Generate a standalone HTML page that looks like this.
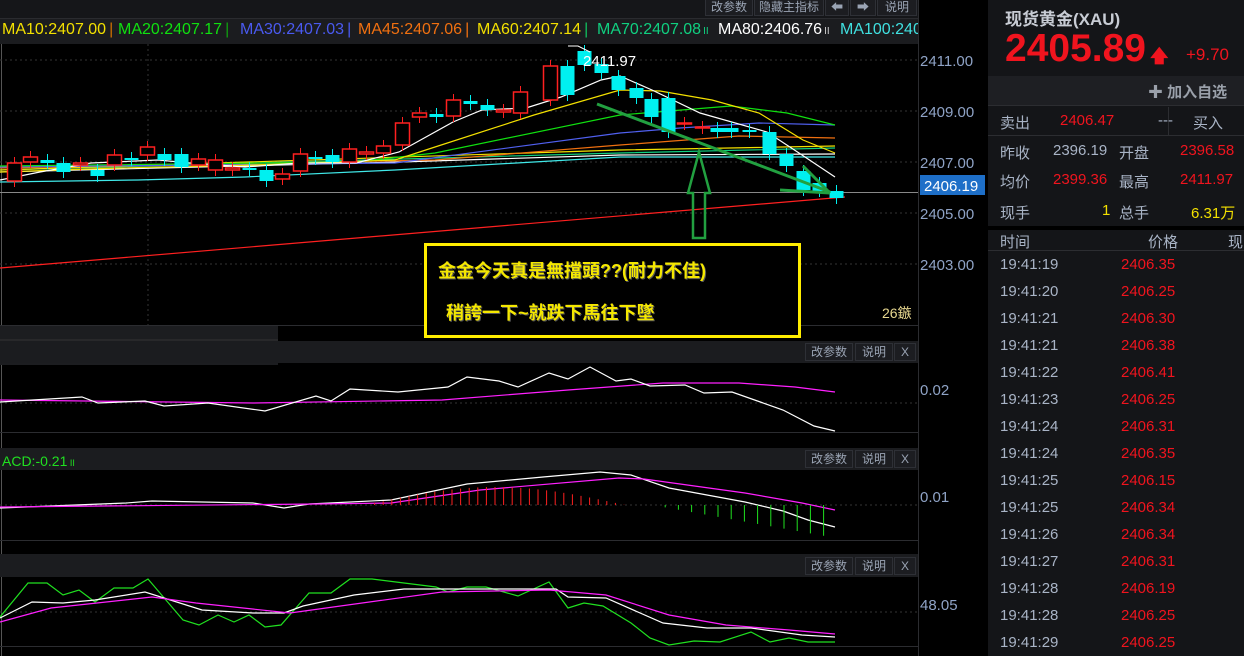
<!DOCTYPE html>
<html><head><meta charset="utf-8">
<style>
*{margin:0;padding:0;box-sizing:border-box}
body{width:1244px;height:656px;background:#000;overflow:hidden;font-family:"Liberation Sans","Noto Sans CJK SC",sans-serif;position:relative}
.abs{position:absolute}
.btn{position:absolute;height:18px;background:#1c1d21;border:1px solid #2e3036;color:#9aa4b4;font-size:12px;line-height:16px;text-align:center}
.rp{position:absolute;left:988px;top:0;width:256px;height:656px;background:#141518}
.t{position:absolute;font-size:15px;white-space:nowrap}
.g{color:#a9b4c6}.r{color:#f0141e}.y{color:#f3e000}
.lg{position:absolute;top:1px;font-size:16px;white-space:nowrap}
</style></head><body>
<div class="abs" style="left:0;top:0;width:918px;height:18px;background:#151619"></div>
<div class="abs" style="left:0;top:18px;width:918px;height:26px;background:#1b1c1f;border-top:1px solid #2a2b2f"></div>
<div class="btn" style="left:705px;top:-2px;width:48px">改参数</div>
<div class="btn" style="left:754px;top:-2px;width:70px">隐藏主指标</div>
<div class="btn" style="left:825px;top:-2px;width:24px">⬅</div>
<div class="btn" style="left:850px;top:-2px;width:26px">➡</div>
<div class="btn" style="left:877px;top:-2px;width:40px">说明</div>
<div class="abs" style="left:0;top:20px;width:918px;height:24px;overflow:hidden">
<div class="lg" style="left:2px;color:#f3e000">MA10:2407.00<span style="color:#d07000;margin-left:3px">|</span></div>
<div class="lg" style="left:118px;color:#10e010">MA20:2407.17<span style="color:#10a010;margin-left:3px">|</span></div>
<div class="lg" style="left:240px;color:#4a5af0">MA30:2407.03<span style="margin-left:3px">|</span></div>
<div class="lg" style="left:358px;color:#f07010">MA45:2407.06<span style="margin-left:3px">|</span></div>
<div class="lg" style="left:477px;color:#f3e000">MA60:2407.14<span style="color:#10c060;margin-left:3px">|</span></div>
<div class="lg" style="left:597px;color:#10d080">MA70:2407.08<span style="font-size:10px;margin-left:2px">II</span></div>
<div class="lg" style="left:718px;color:#fff">MA80:2406.76<span style="font-size:10px;color:#ccc;margin-left:2px">II</span></div>
<div class="lg" style="left:840px;color:#40e0e0">MA100:2406.50</div>
</div>

<svg class="abs" style="left:0;top:0" width="988" height="656">
<line x1="1.5" y1="44" x2="1.5" y2="656" stroke="#555"/>
<line x1="918.5" y1="0" x2="918.5" y2="656" stroke="#2b2c30"/>
<g stroke="#333" stroke-dasharray="2,3">
<line x1="0" y1="60" x2="918" y2="60"/><line x1="0" y1="111" x2="918" y2="111"/><line x1="0" y1="162" x2="918" y2="162"/><line x1="0" y1="213" x2="918" y2="213"/><line x1="0" y1="264" x2="918" y2="264"/>
<line x1="148" y1="44" x2="148" y2="325"/><line x1="0" y1="403" x2="918" y2="403"/><line x1="0" y1="505" x2="918" y2="505"/><line x1="0" y1="612" x2="918" y2="612"/>
</g>
<line x1="0" y1="192.5" x2="918" y2="192.5" stroke="#888"/>
<g fill="none" stroke-width="1.2">
<polyline stroke="#ff2020" points="0,268 845,197"/>
<polyline stroke="#40e8e8" points="0,182 138,180 245,177 395,170 620,157 835,157"/>
<polyline stroke="#ffffff" points="0,172 400,162 620,155 835,154"/>
<polyline stroke="#10d080" points="0,170 620,153 835,148"/>
<polyline stroke="#f3e000" points="0,170 620,150 835,146"/>
<polyline stroke="#f07010" points="0,168 435,160 620,145 739,136 835,138"/>
<polyline stroke="#5060f0" points="0,167 395,163 620,133 680,128 759,123 835,125"/>
<polyline stroke="#10e010" points="0,166 356,162 435,153 620,115 731,106 787,113 835,125"/>
<polyline stroke="#f3e000" points="0,172 119,168 253,165 395,160 435,147 534,115 620,90 660,91 712,100 759,113 803,140 835,153"/>
<polyline stroke="#ffffff" points="0,180 40,172 91,163 158,160 190,163 245,167 300,163 356,163 399,152 453,122 482,110 526,108 561,97 601,80 620,76 652,90 700,113 767,132 799,153 835,177"/>
</g>
<g id="c"></g>
<text x="583" y="66" fill="#fff" font-size="15" font-family="Liberation Sans">2411.97</text>
<polyline points="568,46 578,46 590,52" fill="none" stroke="#fff"/>
<line x1="597" y1="104" x2="830" y2="192" stroke="#22a040" stroke-width="3"/>
<line x1="803" y1="166" x2="830" y2="193" stroke="#22a040" stroke-width="3"/>
<line x1="780" y1="190" x2="830" y2="193" stroke="#22a040" stroke-width="3"/>
<polygon points="699,152 710,193 705,193 705,238 693,238 693,193 688,193" fill="none" stroke="#22a040" stroke-width="2.5"/>
<rect x="0" y="325" width="278" height="40" fill="#1c1d20"/><line x1="0" y1="340" x2="278" y2="340" stroke="#333"/>
<line x1="0" y1="325.5" x2="918" y2="325.5" stroke="#2b2c30"/>
<rect x="0" y="341" width="918" height="22" fill="#1b1c1f"/>
<line x1="0" y1="432.5" x2="918" y2="432.5" stroke="#2b2c30"/>
<rect x="0" y="448" width="918" height="22" fill="#1b1c1f"/>
<line x1="0" y1="540.5" x2="918" y2="540.5" stroke="#2b2c30"/>
<rect x="0" y="554" width="918" height="23" fill="#1b1c1f"/>
<line x1="0" y1="646.5" x2="918" y2="646.5" stroke="#2b2c30"/>
<g fill="none" stroke-width="1.2">
<polyline stroke="#ff20ff" points="0,400 253,403 442,400 568,390 663,383 739,383 795,387 835,392"/>
<polyline stroke="#fff" points="0,402 82,397 98,403 145,401 164,406 208,403 265,411 316,396 331,401 350,389 398,392 448,387 467,377 499,381 518,387 549,373 568,379 590,367 616,381 631,379 650,386 685,385 704,393 732,392 783,410 814,426 835,431"/>
<polyline stroke="#fff" points="0,508 126,503 152,501 253,503 284,508 309,504 391,500 467,484 543,477 600,472 631,475 669,488 745,502 783,511 808,520 835,527"/>
<polyline stroke="#ff20ff" points="0,507 316,504 391,503 480,490 619,478 644,479 745,493 802,503 835,510"/>
<polyline stroke="#20e020" points="0,617 28,583 47,583 63,595 79,590 95,602 114,588 133,588 148,579 183,620 199,625 218,615 234,622 249,615 265,627 281,625 309,593 331,593 350,579 372,579 436,587 448,592 467,587 486,587 518,596 549,582 568,608 584,603 603,606 631,623 650,638 669,645 694,641 720,642 751,632 770,642 789,638 808,642 835,642"/>
<polyline stroke="#fff" points="0,618 32,602 63,603 95,600 145,592 202,610 253,613 284,613 303,606 354,595 404,589 556,589 568,597 606,598 663,623 707,628 751,628 802,635 835,637"/>
<polyline stroke="#ff20ff" points="0,622 51,608 152,597 196,603 290,613 442,592 549,590 606,595 669,615 726,625 789,630 835,634"/>
</g>
<g id="h"></g>
<g fill="#8fa3c6" font-size="15" font-family="Liberation Sans">
<text x="920" y="66">2411.00</text><text x="920" y="117">2409.00</text><text x="920" y="168">2407.00</text><text x="920" y="219">2405.00</text><text x="920" y="270">2403.00</text>
<text x="920" y="395">0.02</text><text x="920" y="502">0.01</text><text x="920" y="610">48.05</text>
</g>
<rect x="920" y="175" width="65" height="20" fill="#1e6fc8"/>
<text x="924" y="191" fill="#fff" font-size="15" font-family="Liberation Sans">2406.19</text>
<text x="882" y="318" fill="#e8d890" font-size="14" font-family="Liberation Sans,Noto Sans CJK SC">26鏃</text>
<text x="2" y="466" fill="#20e020" font-size="14" font-family="Liberation Sans">ACD:-0.21<tspan font-size="9"> II</tspan></text>
</svg>
<div class="btn" style="left:805px;top:343px;width:48px">改参数</div><div class="btn" style="left:855px;top:343px;width:38px">说明</div><div class="btn" style="left:894px;top:343px;width:22px">X</div>
<div class="btn" style="left:805px;top:450px;width:48px">改参数</div><div class="btn" style="left:855px;top:450px;width:38px">说明</div><div class="btn" style="left:894px;top:450px;width:22px">X</div>
<div class="btn" style="left:805px;top:557px;width:48px">改参数</div><div class="btn" style="left:855px;top:557px;width:38px">说明</div><div class="btn" style="left:894px;top:557px;width:22px">X</div>

<div class="abs" style="left:424px;top:243px;width:377px;height:95px;border:3px solid #ffee00;background:#000"></div>
<div class="t" style="left:438px;top:257px;font-size:18px;font-weight:bold;color:#f5e800;text-shadow:1px 1px 0 #555">金金今天真是無擋頭??(耐力不佳)</div>
<div class="t" style="left:446px;top:299px;font-size:18px;font-weight:bold;color:#f5e800;text-shadow:1px 1px 0 #555">稍誇一下~就跌下馬往下墜</div>

<div class="rp">
 <div class="t" style="left:17px;top:5px;font-size:17px;font-weight:bold;color:#c8ccd4">现货黄金(XAU)</div>
 <div class="t r" style="left:17px;top:27px;font-size:39px;font-weight:bold">2405.89</div>
 <div class="t r" style="left:162px;top:44px;font-size:18px;font-weight:bold">🡅</div>
 <div class="t r" style="left:198px;top:45px;font-size:17px">+9.70</div>
 <div class="abs" style="left:0;top:76px;width:256px;height:30px;background:#1e1f23;border-bottom:1px solid #2c2d31"></div>
 <div class="t" style="left:160px;top:81px;font-size:15px;font-weight:bold;color:#9aa0aa">✚ 加入自选</div>
 <div class="abs" style="left:0;top:135px;width:256px;height:1px;background:#2c2d31"></div>
 <div class="abs" style="left:180px;top:107px;width:1px;height:28px;background:#2c2d31"></div>
 <div class="t g" style="left:12px;top:112px">卖出</div><div class="t r" style="left:72px;top:112px">2406.47</div><div class="t g" style="left:170px;top:112px">---</div><div class="t g" style="left:205px;top:112px">买入</div>
 <div class="t g" style="left:12px;top:142px">昨收</div><div class="t g" style="left:65px;top:142px">2396.19</div><div class="t g" style="left:131px;top:142px">开盘</div><div class="t r" style="left:192px;top:142px">2396.58</div>
 <div class="t g" style="left:12px;top:171px">均价</div><div class="t r" style="left:65px;top:171px">2399.36</div><div class="t g" style="left:131px;top:171px">最高</div><div class="t r" style="left:192px;top:171px">2411.97</div>
 <div class="t g" style="left:12px;top:202px">现手</div><div class="t y" style="left:114px;top:202px">1</div><div class="t g" style="left:131px;top:202px">总手</div><div class="t y" style="left:203px;top:202px">6.31万</div>
 <div class="abs" style="left:0;top:226px;width:256px;height:4px;background:#000"></div>
 <div class="abs" style="left:0;top:250px;width:256px;height:1px;background:#2c2d31"></div>
 <div class="t g" style="left:12px;top:231px">时间</div><div class="t g" style="left:160px;top:231px">价格</div><div class="t g" style="left:240px;top:231px">现</div>
 <div id="rows"></div>
</div>
<script>
var c=[[14,163,181,'r'],[30,157,162,'r'],[47,160,163,'c'],[63,163,172,'c'],[80,163,165,'r'],[97,170,176,'c'],[114,155,165,'r'],[131,158,160,'c'],[147,147,155,'r'],[164,154,160,'c'],[181,154,167,'c'],[198,159,165,'r'],[215,160,170,'r'],[232,168,170,'r'],[249,168,170,'c'],[266,170,181,'c'],[282,174,179,'r'],[300,154,171,'r'],[315,157,159,'c'],[332,155,162,'c'],[349,149,162,'r'],[366,152,154,'r'],[383,146,153,'r'],[402,123,145,'r'],[419,113,117,'r'],[436,114,117,'c'],[453,100,116,'r'],[470,101,104,'c'],[487,105,110,'c'],[503,110,112,'r'],[520,92,113,'r'],[550,66,100,'r'],[567,66,95,'c'],[584,51,65,'c'],[601,64,73,'c'],[618,76,90,'c'],[636,88,98,'c'],[651,99,117,'c'],[668,98,132,'c'],[684,123,124,'r'],[702,127,128,'r'],[717,128,132,'c'],[731,128,132,'c'],[749,130,132,'c'],[769,132,154,'c'],[786,154,166,'c'],[803,171,190,'c'],[819,183,191,'c'],[836,191,198,'c']];
var s='';c.forEach(function(k){var col=k[3]=='r'?'#ff2020':'#00f0f0';s+='<line x1="'+(k[0]+.5)+'" y1="'+(k[1]-6)+'" x2="'+(k[0]+.5)+'" y2="'+(k[2]+6)+'" stroke="'+col+'"/>';s+='<rect x="'+(k[0]-6.5)+'" y="'+k[1]+'" width="14" height="'+Math.max(k[2]-k[1],1)+'" '+(k[3]=='r'?'fill="#000" stroke="#ff2020" stroke-width="1.5"':'fill="#00f0f0"')+'/>';});
document.getElementById('c').innerHTML=s;
var h='';for(var x=366;x<=625;x+=8.6){var t=505-18*Math.sin((x-366)/259*Math.PI);h+='<line x1="'+x+'" y1="'+t+'" x2="'+x+'" y2="505" stroke="#ff2020"/>';}
for(var x=652;x<=836;x+=13.2){var b=505+33*(x-652)/184;h+='<line x1="'+x+'" y1="505" x2="'+x+'" y2="'+b+'" stroke="#20e020"/>';}
document.getElementById('h').innerHTML=h;
var R=[["19:41:19","2406.35"],["19:41:20","2406.25"],["19:41:21","2406.30"],["19:41:21","2406.38"],["19:41:22","2406.41"],["19:41:23","2406.25"],["19:41:24","2406.31"],["19:41:24","2406.35"],["19:41:25","2406.15"],["19:41:25","2406.34"],["19:41:26","2406.34"],["19:41:27","2406.31"],["19:41:28","2406.19"],["19:41:28","2406.25"],["19:41:29","2406.25"]];
var q='';R.forEach(function(r,i){var y=256+i*27;q+='<div class="t g" style="left:12px;top:'+y+'px;font-size:15px">'+r[0]+'</div><div class="t r" style="left:133px;top:'+y+'px;font-size:15px">'+r[1]+'</div>';});
document.getElementById('rows').innerHTML=q;
</script>
</body></html>
